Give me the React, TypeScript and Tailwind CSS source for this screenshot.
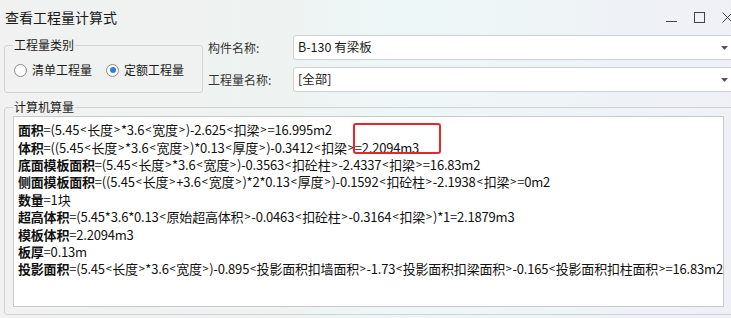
import React from "react";

const F = { fontFamily: '"Microsoft YaHei", "Noto Sans CJK SC", "Noto Sans", sans-serif' };

const lines: [string, string][] = [
  ["面积", "=(5.45<长度>*3.6<宽度>)-2.625<扣梁>=16.995m2"],
  ["体积", "=((5.45<长度>*3.6<宽度>)*0.13<厚度>)-0.3412<扣梁>=2.2094m3"],
  ["底面模板面积", "=(5.45<长度>*3.6<宽度>)-0.3563<扣砼柱>-2.4337<扣梁>=16.83m2"],
  ["侧面模板面积", "=((5.45<长度>+3.6<宽度>)*2*0.13<厚度>)-0.1592<扣砼柱>-2.1938<扣梁>=0m2"],
  ["数量", "=1块"],
  ["超高体积", "=(5.45*3.6*0.13<原始超高体积>-0.0463<扣砼柱>-0.3164<扣梁>)*1=2.1879m3"],
  ["模板体积", "=2.2094m3"],
  ["板厚", "=0.13m"],
  ["投影面积", "=(5.45<长度>*3.6<宽度>)-0.895<投影面积扣墙面积>-1.73<投影面积扣梁面积>-0.165<投影面积扣柱面积>=16.83m2"],
];

function Radio({ checked, label }: { checked?: boolean; label: string }) {
  return (
    <div className="flex items-center gap-[5px]">
      <span className="w-[13px] h-[13px] rounded-full border border-[#8a8a8a] bg-white flex items-center justify-center">
        {checked && <span className="w-[6px] h-[6px] rounded-full bg-[#2f7be0]" />}
      </span>
      <span className="text-[12px] text-[#1a1a1a]">{label}</span>
    </div>
  );
}

function Combo({ text }: { text: string }) {
  return (
    <div className="flex-1 h-[25px] mr-[-4px] bg-white border border-[#cfcfcf] rounded-[3px] flex items-center pl-[4px] pr-[6px]">
      <span className="flex-1 text-[12.5px] text-[#1a1a1a]">{text}</span>
      <svg width="7" height="4" viewBox="0 0 7 4"><path d="M0 0h7L3.5 4z" fill="#555" /></svg>
    </div>
  );
}

function renderFormula(s: string) {
  const parts = s.split(/([<>])/);
  return parts.map((p, i) =>
    p === "<" || p === ">" ? (
      <span key={i} className="inline-flex justify-center w-[8px] overflow-visible text-[11px] leading-[17px]">{p}</span>
    ) : (
      <span key={i}>{p}</span>
    )
  );
}

export default function App() {
  return (
    <div
      className="w-[731px] h-[318px] overflow-hidden bg-[linear-gradient(90deg,#f1f1f1_0%,#eef3f2_40%,#edf7f7_55%,#eff0f6_100%)] text-[#1a1a1a] flex flex-col"
      style={F}
    >
      {/* title bar */}
      <div className="h-[34px] flex items-center pl-[5px] shrink-0">
        <span className="text-[14px] text-[#1a1a1a] flex-1">查看工程量计算式</span>
        <div className="flex items-center gap-[17px] mr-[-2px]">
          <svg width="11" height="11" viewBox="0 0 11 11"><path d="M0 9.5h11" stroke="#444" strokeWidth="1" /></svg>
          <svg width="11" height="11" viewBox="0 0 11 11"><rect x="0.5" y="0.5" width="10" height="10" fill="none" stroke="#444" strokeWidth="1" /></svg>
          <svg width="11" height="11" viewBox="0 0 11 11"><path d="M0.5 0.5l10 10M10.5 0.5l-10 10" stroke="#444" strokeWidth="1" /></svg>
        </div>
      </div>

      {/* top row */}
      <div className="flex pl-[4px] mt-[1px] shrink-0">
        <div className="relative w-[199px] h-[48px] mt-[10px] border border-[#d3d3d3] rounded-[3px]">
          <span className="absolute left-[8px] top-[-10px] text-[12px] leading-[18px] px-[1px] bg-[#f1f1f1] text-[#1a1a1a]">工程量类别</span>
          <div className="flex items-center gap-[14px] pl-[9px] pt-[15px]">
            <Radio label="清单工程量" />
            <Radio checked label="定额工程量" />
          </div>
        </div>
        <div className="flex-1 flex flex-col gap-[7px] ml-[5px]">
          <div className="flex items-center">
            <span className="w-[85px] text-[12px] text-[#333]">构件名称:</span>
            <Combo text="B-130 有梁板" />
          </div>
          <div className="flex items-center">
            <span className="w-[85px] text-[12px] text-[#333]">工程量名称:</span>
            <Combo text="[全部]" />
          </div>
        </div>
      </div>

      {/* calc group */}
      <div className="relative ml-[4px] mr-[-6px] mt-[14px] h-[208px] border border-[#d3d3d3] rounded-[3px] shrink-0">
        <span className="absolute left-[8px] top-[-10px] text-[12px] leading-[18px] px-[1px] bg-[#f1f1f1] text-[#1a1a1a]">计算机算量</span>
        <div className="relative ml-[8px] mt-[8px] w-[711px] h-[191px] bg-white border border-[#c9c9c9] pl-[4px] pt-[4px]">
          {lines.map(([k, v], i) => (
            <div key={i} className="h-[17.4px] flex items-center text-[13px] leading-[17px] whitespace-nowrap text-[#111] tracking-[-0.2px]">
              <span className="font-bold">{k}</span>
              {renderFormula(v)}
            </div>
          ))}
          <div className="absolute left-[339px] top-[6px] w-[88px] h-[31px] border-2 border-[#e8262a] rounded-[3px]" />
        </div>
      </div>
    </div>
  );
}
